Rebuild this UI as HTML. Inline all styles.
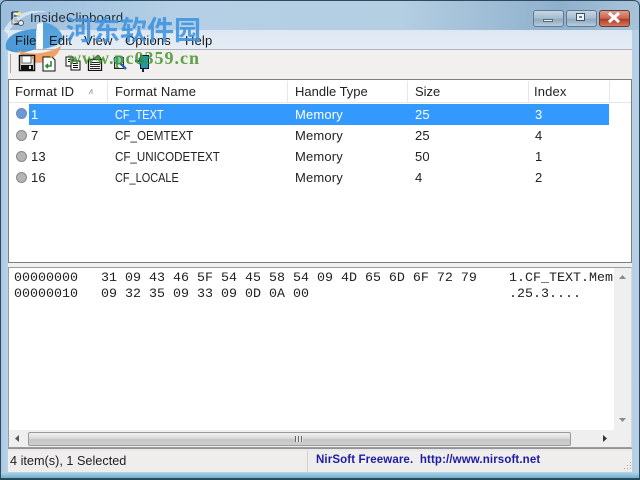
<!DOCTYPE html>
<html><head><meta charset="utf-8">
<style>
html,body{margin:0;padding:0;width:640px;height:480px;overflow:hidden;background:#fff}
#w{position:relative;width:640px;height:480px;overflow:hidden;font-family:"Liberation Sans",sans-serif;font-size:13px;letter-spacing:.15px;color:#1a1a1a}
.a{position:absolute;white-space:nowrap}
.m{font-family:"Liberation Mono",monospace;font-size:13.33px;letter-spacing:0;color:#222;white-space:pre}
.r{color:#222}
.c{transform:scaleX(.87);transform-origin:0 0;letter-spacing:0}
</style></head><body><div id="w">
<!-- frame -->
<div class="a" style="left:0;top:0;width:640px;height:480px;background:linear-gradient(90deg,#a9c6e2 0,#b9d3ea 8px,#c6dcee 320px,#b6cfe4 640px);"></div>
<div class="a" style="left:0;top:0;width:640px;height:30px;background:linear-gradient(90deg,#9cbedd 0,#b5d0e6 180px,#b4cee2 400px,#8fb0cc 560px,#a8c4da 640px)"></div>
<div class="a" style="left:0;top:0;width:638px;height:478px;border:1px solid #2e4a60;border-radius:6px 6px 0 0"></div>
<div class="a" style="left:1px;top:472px;width:638px;height:6px;background:linear-gradient(#b4d4ea,#6fb0d2)"></div>
<div class="a" style="left:0;top:478px;width:640px;height:2px;background:#2a4a58"></div>
<!-- title icon -->
<svg class="a" style="left:10px;top:11px" width="16" height="16" viewBox="0 0 16 16"><path d="M2 1h6l1 1v4" fill="#fff" stroke="#222"/><path d="M2 1v12h8" fill="none" stroke="#222" stroke-width="1.4"/><path d="M4 5h4M4 8h3M4 10h4" stroke="#222"/><rect x="8" y="1" width="3" height="3" fill="#f2e44a"/><circle cx="11" cy="12" r="2.5" fill="#e8eef2" stroke="#555"/></svg>
<div class="a" style="left:30px;top:10px;font-size:13px;letter-spacing:.2px;color:#1e2a34">InsideClipboard</div>
<!-- window buttons -->
<div class="a" style="left:533px;top:10px;width:29px;height:15px;border:1px solid #5f7a92;border-radius:3px;background:linear-gradient(#c6d6e4,#a5bccf 50%,#8ea8bd 55%,#b8ccdb)"></div>
<div class="a" style="left:543px;top:19px;width:10px;height:3px;background:#eef3f7;border:1px solid #53697c;box-sizing:border-box"></div>
<div class="a" style="left:566px;top:10px;width:29px;height:15px;border:1px solid #5f7a92;border-radius:3px;background:linear-gradient(#c6d6e4,#a5bccf 50%,#8ea8bd 55%,#b8ccdb)"></div>
<div class="a" style="left:576px;top:13px;width:9px;height:8px;border:1px solid #3d5164;box-sizing:border-box;background:#eef3f7"></div>
<div class="a" style="left:579px;top:16px;width:3px;height:2px;background:#6a7f91"></div>
<div class="a" style="left:599px;top:10px;width:29px;height:15px;border:1px solid #6b3a30;border-radius:3px;background:linear-gradient(#dd9c8c,#c9634f 50%,#b03a22 55%,#d07a60)"></div>
<svg class="a" style="left:606px;top:11px" width="16" height="14" viewBox="0 0 16 14"><path d="M3 2l10 9M13 2L3 11" stroke="#fff" stroke-width="3"/></svg>
<!-- menu -->
<div class="a" style="left:8px;top:30px;width:624px;height:20px;background:linear-gradient(#dde7f2,#e6edf6)"></div>
<div class="a" style="left:8px;top:49px;width:624px;height:1px;background:#aeb4ba"></div>
<!-- toolbar -->
<div class="a" style="left:8px;top:50px;width:624px;height:29px;background:#f1f0ee"></div>
<div class="a" style="left:10px;top:54px;width:1px;height:19px;background:#a9a6a0"></div>
<!-- watermark logo (under text) -->
<svg class="a" style="left:0;top:0" width="75" height="70" viewBox="0 0 75 70">
<path d="M4 30C12 14 30 8 48 12c-16-1-32 6-41 22z" fill="#fff" opacity=".55"/>
<path d="M6 49C4 38 14 30 36 29v20C26 53 12 54 6 49z" fill="#3f93d4" opacity=".92"/>
<path d="M37 24l6-2v27h-6z" fill="#fff" opacity=".9"/>
<path d="M43 22C54 24 62 31 63 38c0 5-8 9-20 11z" fill="#4b9ddb" opacity=".92"/>
<path d="M18 50C30 56 48 54 61 46c-2 9-10 15-22 17-10 0-17-6-21-13z" fill="#f09a5c" opacity=".92"/>
</svg>
<!-- toolbar icons -->
<svg class="a" style="left:18px;top:54px" width="18" height="18" viewBox="0 0 18 18"><rect x="1.500" y="1.500" width="15" height="15" fill="#ddd" stroke="#111" stroke-width="1.500"/><rect x="4" y="2" width="9" height="7" fill="#fff" stroke="#333" stroke-width=".7"/><rect x="3" y="11" width="12" height="5" fill="#111"/><rect x="11" y="12" width="2" height="3" fill="#ddd"/><rect x="14" y="2" width="2" height="3" fill="#c9a060"/></svg>
<svg class="a" style="left:41px;top:54px" width="16" height="18" viewBox="0 0 16 18"><path d="M2 3h9l3 3v11H2z" fill="#fff" stroke="#111"/><path d="M10 7v5H5M7 10l-2 2 2 2" fill="none" stroke="#2e8a2e" stroke-width="1.600"/><path d="M9 1l2 3" stroke="#c9b040" stroke-width="1.500"/></svg>
<svg class="a" style="left:65px;top:56px" width="16" height="15" viewBox="0 0 16 15"><path d="M1 1h7v9H1z" fill="#fff" stroke="#111"/><path d="M6 5h9v9H6z" fill="#fff" stroke="#111"/><path d="M8 7.500h5M8 9.500h5M8 11.500h5M3 3.500h3M3 5.500h2" stroke="#111"/></svg>
<svg class="a" style="left:87px;top:54px" width="16" height="17" viewBox="0 0 16 17"><path d="M1.500 5.500h13v11h-13z" fill="#fff" stroke="#111" stroke-width="1.300"/><path d="M3 8.500h10M3 10.500h10M3 12.500h10M3 14.500h10" stroke="#222"/><path d="M6 5l5-4 3 3-4 2z" fill="#5a9a6a" stroke="#222" stroke-width=".6"/></svg>
<svg class="a" style="left:112px;top:54px" width="16" height="18" viewBox="0 0 16 18"><path d="M2.500 3.500h9v11h-9z" fill="#fff" stroke="#222"/><circle cx="6" cy="6" r="4" fill="#7cc8b8" stroke="#2a6a60"/><path d="M8 9l6 6" stroke="#2b5fb0" stroke-width="2.500"/></svg>
<svg class="a" style="left:134px;top:54px" width="16" height="18" viewBox="0 0 16 18"><path d="M6.500 1.500h8v13h-8z" fill="#1f9aa0" stroke="#114"/><path d="M1 7h6M5 4l3 3-3 3" fill="none" stroke="#0d6f78" stroke-width="2.200"/><path d="M9 15v3" stroke="#123" stroke-width="2"/></svg>
<div class="a" style="left:15px;top:33px">File</div>
<div class="a" style="left:49px;top:33px">Edit</div>
<div class="a" style="left:84px;top:33px">View</div>
<div class="a" style="left:125px;top:33px">Options</div>
<div class="a" style="left:185px;top:33px">Help</div>
<!-- list -->
<div class="a" style="left:8px;top:79px;width:624px;height:184px;box-sizing:border-box;border:1px solid #7c7f82;background:#fff"></div>
<div class="a" style="left:9px;top:80px;width:622px;height:23px;background:#fff;border-bottom:1px solid #e3e6ea;box-sizing:border-box"></div>
<div class="a" style="left:107px;top:81px;width:1px;height:21px;background:#e3e6ea"></div>
<div class="a" style="left:287px;top:81px;width:1px;height:21px;background:#e3e6ea"></div>
<div class="a" style="left:407px;top:81px;width:1px;height:21px;background:#e3e6ea"></div>
<div class="a" style="left:528px;top:81px;width:1px;height:21px;background:#e3e6ea"></div>
<div class="a" style="left:609px;top:81px;width:1px;height:21px;background:#e3e6ea"></div>
<div class="a r" style="left:15px;top:84px">Format ID</div>
<svg class="a" style="left:87px;top:87px" width="8" height="9"><path d="M2 7L5 2M5 2v5" stroke="#aaa" fill="none"/></svg>
<div class="a r" style="left:115px;top:84px">Format Name</div>
<div class="a r" style="left:295px;top:84px;letter-spacing:0">Handle Type</div>
<div class="a r" style="left:415px;top:84px;letter-spacing:0">Size</div>
<div class="a r" style="left:534px;top:84px">Index</div>
<!-- selected row -->
<div class="a" style="left:29px;top:104px;width:580px;height:21px;background:#3399ff"></div>
<svg class="a" style="left:15px;top:107px" width="13" height="13"><circle cx="6.500" cy="6.500" r="5" fill="#6a9ad8" stroke="#6d8dae"/></svg>
<svg class="a" style="left:15px;top:129px" width="13" height="13"><circle cx="6.500" cy="6.500" r="5" fill="#b4b4b4" stroke="#888"/></svg>
<svg class="a" style="left:15px;top:150px" width="13" height="13"><circle cx="6.500" cy="6.500" r="5" fill="#b4b4b4" stroke="#888"/></svg>
<svg class="a" style="left:15px;top:171px" width="13" height="13"><circle cx="6.500" cy="6.500" r="5" fill="#b4b4b4" stroke="#888"/></svg>
<div class="a" style="left:31px;top:107px;color:#fff">1</div>
<div class="a c" style="left:115px;top:107px;color:#fff;transform:scaleX(.84)">CF_TEXT</div>
<div class="a" style="left:295px;top:107px;color:#fff">Memory</div>
<div class="a" style="left:415px;top:107px;color:#fff">25</div>
<div class="a" style="left:535px;top:107px;color:#fff">3</div>
<div class="a r" style="left:31px;top:128px">7</div><div class="a r c" style="left:115px;top:128px;transform:scaleX(.895)">CF_OEMTEXT</div><div class="a r" style="left:295px;top:128px">Memory</div><div class="a r" style="left:415px;top:128px">25</div><div class="a r" style="left:535px;top:128px">4</div>
<div class="a r" style="left:31px;top:149px">13</div><div class="a r c" style="left:115px;top:149px;transform:scaleX(.89)">CF_UNICODETEXT</div><div class="a r" style="left:295px;top:149px">Memory</div><div class="a r" style="left:415px;top:149px">50</div><div class="a r" style="left:535px;top:149px">1</div>
<div class="a r" style="left:31px;top:170px">16</div><div class="a r c" style="left:115px;top:170px;transform:scaleX(.84)">CF_LOCALE</div><div class="a r" style="left:295px;top:170px">Memory</div><div class="a r" style="left:415px;top:170px">4</div><div class="a r" style="left:535px;top:170px">2</div>
<!-- splitter + hex -->
<div class="a" style="left:8px;top:263px;width:624px;height:4px;background:#f1f0ee"></div>
<div class="a" style="left:8px;top:267px;width:624px;height:181px;box-sizing:border-box;border:1px solid #9a9da0;border-right:1px solid #d8d8d8;background:#fff"></div>
<div class="a m" style="left:14px;top:271px">00000000</div>
<div class="a m" style="left:101px;top:271px">31 09 43 46 5F 54 45 58 54 09 4D 65 6D 6F 72 79</div>
<div class="a m" style="left:14px;top:287px">00000010</div>
<div class="a m" style="left:101px;top:287px">09 32 35 09 33 09 0D 0A 00</div>
<div class="a m" style="left:509px;top:271px;width:104px;overflow:hidden">1.CF_TEXT.Memory</div>
<div class="a m" style="left:509px;top:287px">.25.3....</div>
<!-- vscroll -->
<div class="a" style="left:614px;top:268px;width:17px;height:162px;background:#efefef"></div>
<svg class="a" style="left:618px;top:274px" width="9" height="7"><path d="M1 5l3.500-4 3.500 4z" fill="#8a8a8a"/></svg>
<svg class="a" style="left:618px;top:417px" width="9" height="7"><path d="M1 1l3.500 4 3.500-4z" fill="#8a8a8a"/></svg>
<!-- hscroll -->
<div class="a" style="left:9px;top:430px;width:622px;height:17px;background:#efefef"></div>
<svg class="a" style="left:14px;top:434px" width="7" height="9"><path d="M5 1L1 4.500 5 8z" fill="#555"/></svg>
<div class="a" style="left:28px;top:432px;width:543px;height:14px;box-sizing:border-box;border:1px solid #9a9a9a;border-radius:2px;background:linear-gradient(#f0f0f0,#dadada 45%,#c4c4c4 55%,#cfcfcf)"></div>
<div class="a" style="left:295px;top:436px;width:8px;height:6px;background:repeating-linear-gradient(90deg,#666 0 1px,#e8e8e8 1px 3px)"></div>
<svg class="a" style="left:601px;top:434px" width="7" height="9"><path d="M2 1l4 3.500L2 8z" fill="#333"/></svg>
<!-- status -->
<div class="a" style="left:8px;top:448px;width:624px;height:3px;background:#e9e9e9;border-top:1px solid #8f9296;box-sizing:border-box"></div>
<div class="a" style="left:8px;top:451px;width:624px;height:21px;background:#f0eded"></div>
<div class="a" style="left:307px;top:451px;width:1px;height:21px;background:#d3d0d0"></div>
<div class="a r" style="left:10px;top:454px;letter-spacing:0;font-size:12.700px">4 item(s), 1 Selected</div>
<div class="a" style="left:316px;top:454px;font-size:11.500px;font-weight:bold;letter-spacing:.12px;color:#1c1ca8">NirSoft Freeware.&nbsp; http://www.nirsoft.net</div>
<svg class="a" style="left:622px;top:461px" width="10" height="10"><path d="M8 1h1v1H8zM5 4h1v1H5zM8 4h1v1H8zM2 7h1v1H2zM5 7h1v1H5zM8 7h1v1H8z" fill="#aaa"/></svg>
<!-- watermark text -->
<div class="a" style="left:66px;top:13px;font-family:'Noto Sans CJK SC',sans-serif;font-size:27px;line-height:32px;font-weight:700;letter-spacing:0;color:rgba(62,146,222,.88)">河东软件园</div>
<div class="a" style="left:68px;top:48px;font-family:'Liberation Serif',serif;font-size:18px;font-weight:bold;letter-spacing:1px;color:rgba(72,150,50,.88)">www.pc0359.cn</div>
</div></body></html>
